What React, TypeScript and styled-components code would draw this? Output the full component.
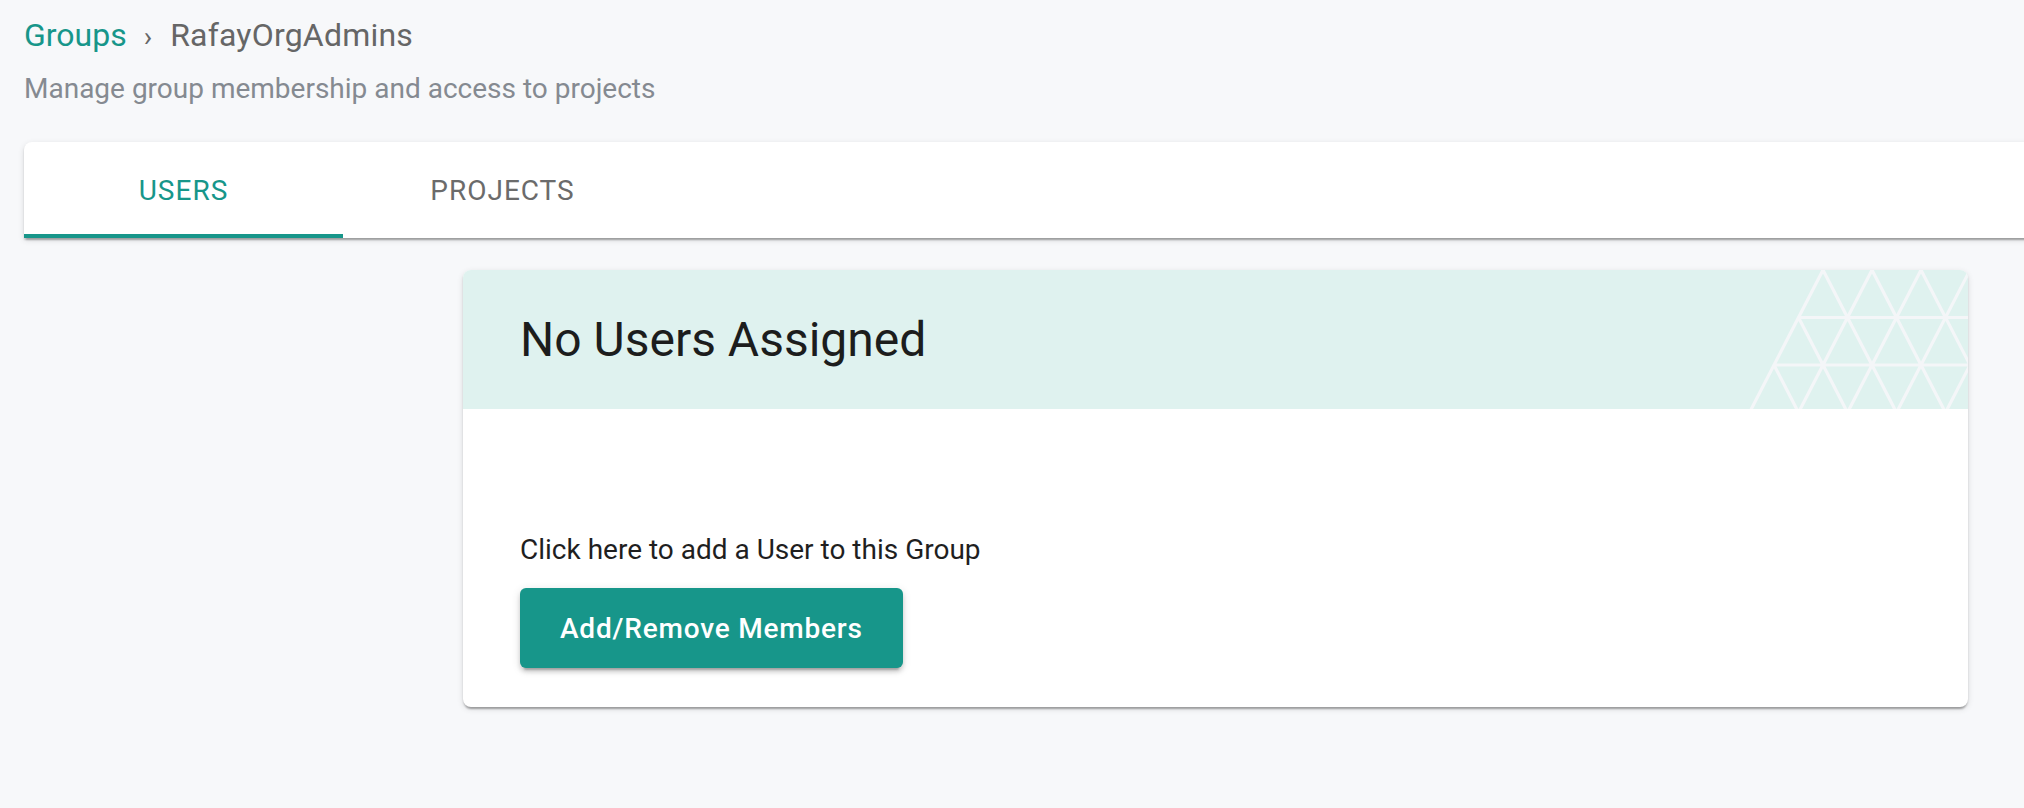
import React from "react";
import styled, { createGlobalStyle } from "styled-components";

const GlobalStyle = createGlobalStyle`
  html, body {
    margin: 0;
    padding: 0;
    background: #f7f8fa;
    overflow-x: hidden;
  }
  body {
    font-family: Roboto, "Noto Sans", "Liberation Sans", sans-serif;
    -webkit-font-smoothing: antialiased;
  }
  * { box-sizing: border-box; }
`;

const TEAL = "#17968a";

const Page = styled.div`
  padding: 16px 0 40px 24px;
  min-height: 808px;
`;

const Breadcrumb = styled.nav`
  display: flex;
  align-items: baseline;
  height: 38px;
  font-size: 32px;
  line-height: 38px;
  color: #636363;
`;

const Crumb = styled.span<{ $link?: boolean }>`
  color: ${(p) => (p.$link ? TEAL : "#666666")};
  letter-spacing: ${(p) => (p.$link ? "0" : "0.2px")};
  cursor: ${(p) => (p.$link ? "pointer" : "default")};
`;

const Sep = styled.span`
  margin: 0 18px 0 17px;
  font-size: 28px;
  line-height: 1;
  color: #666666;
`;

const Subtitle = styled.p`
  margin: 18px 0 0;
  font-size: 28px;
  line-height: 34px;
  color: #858a91;
`;

const TabBar = styled.div`
  margin-top: 36px;
  margin-right: -20px;
  display: flex;
  height: 96px;
  background: #ffffff;
  border-radius: 8px 8px 0 0;
  box-shadow: 0 4px 2px -2px rgba(0, 0, 0, 0.2), 0 2px 2px 0 rgba(0, 0, 0, 0.14),
    0 2px 6px 0 rgba(0, 0, 0, 0.12);
  overflow: hidden;
`;

const Tab = styled.button<{ $active?: boolean }>`
  width: 319px;
  height: 96px;
  border: none;
  background: transparent;
  font-family: inherit;
  font-size: 28px;
  font-weight: 400;
  letter-spacing: 1px;
  text-transform: uppercase;
  color: ${(p) => (p.$active ? TEAL : "#6b6b6b")};
  border-bottom: 4px solid ${(p) => (p.$active ? TEAL : "transparent")};
  padding: 4px 0 0;
  cursor: pointer;
`;

const CardRow = styled.div`
  display: flex;
  padding-left: 439px;
  margin-top: 32px;
`;

const Card = styled.section`
  width: 1505px;
  background: #ffffff;
  border-radius: 8px;
  overflow: hidden;
  box-shadow: 0 4px 2px -2px rgba(0, 0, 0, 0.2), 0 2px 2px 0 rgba(0, 0, 0, 0.14),
    0 2px 6px 0 rgba(0, 0, 0, 0.12);
`;

const CardHeader = styled.header`
  position: relative;
  height: 139px;
  background: #dff2ef;
  display: flex;
  align-items: center;
  padding-left: 57px;
  overflow: hidden;
`;

const Title = styled.h2`
  margin: 0;
  font-size: 48px;
  font-weight: 400;
  line-height: 56px;
  color: #1c1d1d;
`;

const Pattern = styled.svg`
  position: absolute;
  top: 0;
  right: 0;
  width: 240px;
  height: 139px;
`;

const CardBody = styled.div`
  padding: 120px 57px 39px;
  display: flex;
  flex-direction: column;
  align-items: flex-start;
`;

const Hint = styled.p`
  margin: 0;
  font-size: 28px;
  line-height: 42px;
  color: #1f1f1f;
`;

const PrimaryButton = styled.button`
  margin-top: 17px;
  height: 80px;
  padding: 0 40px;
  border: none;
  border-radius: 6px;
  background: ${TEAL};
  color: #ffffff;
  font-family: inherit;
  font-size: 28px;
  font-weight: 500;
  letter-spacing: 0.8px;
  box-shadow: 0 6px 2px -4px rgba(0, 0, 0, 0.2), 0 4px 4px 0 rgba(0, 0, 0, 0.14),
    0 2px 10px 0 rgba(0, 0, 0, 0.12);
  cursor: pointer;
`;

const TrianglePattern: React.FC = () => {
  const w = 24.5;
  const h = 47.5;
  const H = 145;
  const ox = 95;
  const slopeX = (w / h) * H;
  const apexes = [0, 1, 2, 3, 4, 5].map((i) => ox + i * 2 * w);
  const leftStarts = [0, 1, 2, 3].map((i) => [ox - i * w, i * h]);
  const lines: string[] = [];
  apexes.forEach((x) => lines.push(`M${x} 0 L${x - slopeX} ${H}`));
  apexes.slice(1).forEach((x) => lines.push(`M${x} 0 L${x + slopeX} ${H}`));
  leftStarts.forEach(([x, y]) => {
    const dy = H - y;
    lines.push(`M${x} ${y} L${x + (w / h) * dy} ${H}`);
  });
  lines.push(`M${ox - w} ${h} L260 ${h}`);
  lines.push(`M${ox - 2 * w} ${2 * h} L260 ${2 * h}`);
  return (
    <Pattern viewBox="0 0 240 139" aria-hidden="true">
      <path d={lines.join(" ")} stroke="#f4f6f8" strokeWidth={3.2} fill="none" />
    </Pattern>
  );
};

export default function App() {
  return (
    <>
      <GlobalStyle />
      <Page>
        <Breadcrumb>
          <Crumb $link>Groups</Crumb>
          <Sep>›</Sep>
          <Crumb>RafayOrgAdmins</Crumb>
        </Breadcrumb>
        <Subtitle>Manage group membership and access to projects</Subtitle>
        <TabBar>
          <Tab $active>Users</Tab>
          <Tab>Projects</Tab>
        </TabBar>
        <CardRow>
          <Card>
            <CardHeader>
              <Title>No Users Assigned</Title>
              <TrianglePattern />
            </CardHeader>
            <CardBody>
              <Hint>Click here to add a User to this Group</Hint>
              <PrimaryButton>Add/Remove Members</PrimaryButton>
            </CardBody>
          </Card>
        </CardRow>
      </Page>
    </>
  );
}
